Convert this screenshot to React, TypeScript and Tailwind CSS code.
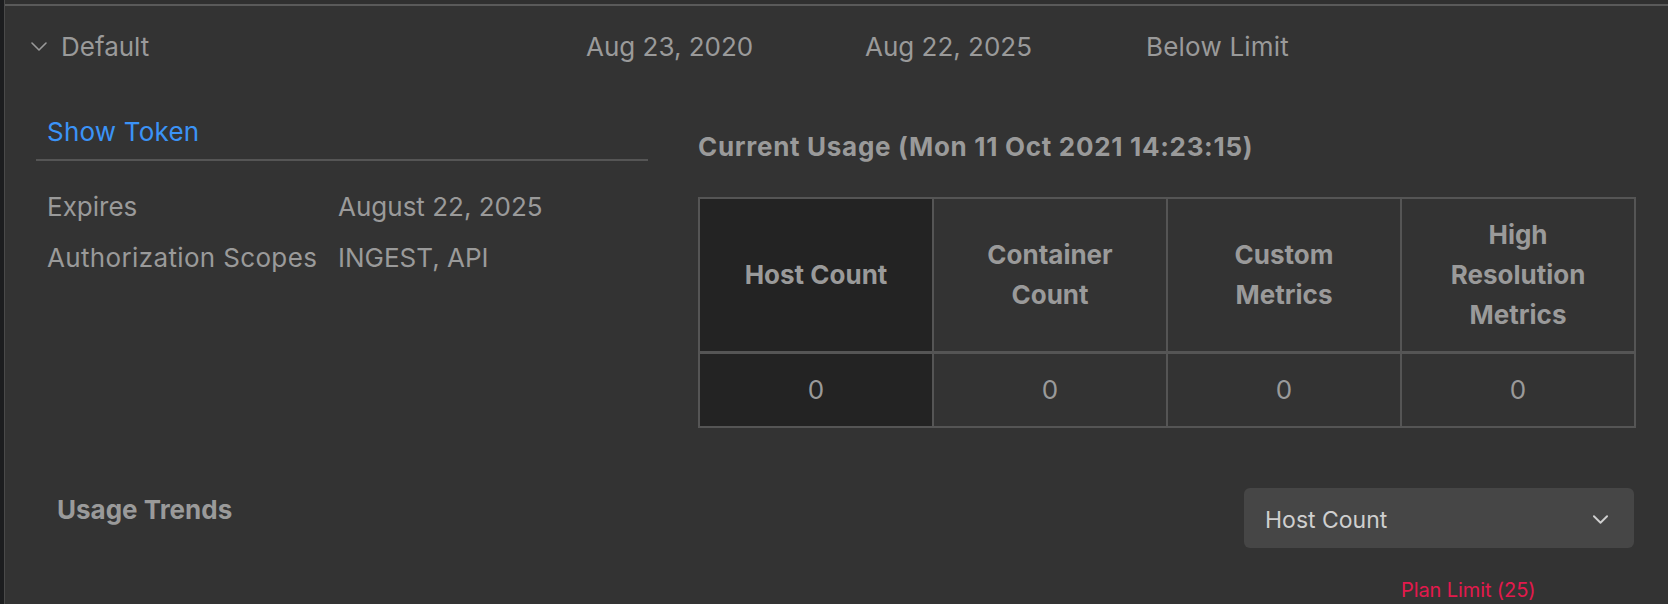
import React from 'react';

const font = { fontFamily: 'Inter, "Noto Sans", sans-serif' };

function Chevron({ className, stroke = 1.6 }: { className?: string; stroke?: number }) {
  return (
    <svg viewBox="0 0 16 9" className={className} fill="none" stroke="currentColor" strokeWidth={stroke}>
      <polyline points="1,1 8,8 15,1" strokeLinecap="round" strokeLinejoin="round" />
    </svg>
  );
}

const headers: string[][] = [
  ['Host Count'],
  ['Container', 'Count'],
  ['Custom', 'Metrics'],
  ['High', 'Resolution', 'Metrics'],
];

export default function App() {
  return (
    <div className="w-[1668px] h-[604px] overflow-hidden bg-[#1c1d1f] flex" style={font}>
      <div className="w-[4px] shrink-0" />
      <div className="flex-1 bg-[#333333] border-l border-[#4a4a4a] flex flex-col text-[#9a9a9a]">
        <div className="h-[4px] bg-[#303030]" />
        <div className="h-[2px] bg-[#5a5a5a]" />

        {/* summary row */}
        <div className="h-[80px] grid grid-cols-[581px_279px_281px_1fr] items-center text-[26px]">
          <div className="flex items-center pl-[26px] gap-[14px]">
            <Chevron className="w-[16px] h-[9px] text-[#9a9a9a]" />
            <span>Default</span>
          </div>
          <span>Aug 23, 2020</span>
          <span>Aug 22, 2025</span>
          <span className="tracking-[0.2px]">Below Limit</span>
        </div>

        {/* detail */}
        <div className="flex pl-[31px] pr-[32px]">
          <div className="w-[612px] pt-[26px]">
            <div className="border-b-2 border-[#555555] pb-[7px] pl-[11px]">
              <button type="button" className="leading-[40px] text-[26px] text-[#3b93f7] tracking-[0.2px]">
                Show Token
              </button>
            </div>
            <div className="mt-[20px] pl-[11px] text-[26px] leading-[51px]">
              <div className="flex">
                <span className="w-[291px]">Expires</span>
                <span>August 22, 2025</span>
              </div>
              <div className="flex">
                <span className="w-[291px] tracking-[0.35px]">Authorization Scopes</span>
                <span>INGEST, API</span>
              </div>
            </div>
          </div>

          <div className="ml-[50px] flex-1 pt-[41px]">
            <h3 className="text-[26px] font-bold leading-[40px] tracking-[0.7px]">
              Current Usage (Mon 11 Oct 2021 14:23:15)
            </h3>
            <table className="mt-[30px] w-full border-collapse table-fixed text-center text-[26px]">
              <thead>
                <tr>
                  {headers.map((lines, i) => (
                    <th
                      key={i}
                      className={`border-2 border-b-[3px] border-[#555555] py-[16px] font-bold leading-[40px] ${
                        i === 0 ? 'bg-[#232323]' : ''
                      }`}
                    >
                      {lines.map((l) => (
                        <span key={l} className="block">
                          {l}
                        </span>
                      ))}
                    </th>
                  ))}
                </tr>
              </thead>
              <tbody>
                <tr>
                  {headers.map((_, i) => (
                    <td
                      key={i}
                      className={`border-2 border-[#555555] py-[16px] leading-[40px] ${
                        i === 0 ? 'bg-[#232323]' : ''
                      }`}
                    >
                      0
                    </td>
                  ))}
                </tr>
              </tbody>
            </table>
          </div>
        </div>

        {/* trends */}
        <div className="mt-[60px] flex items-start justify-between pl-[52px] pr-[34px]">
          <h3 className="mt-[2px] text-[26px] font-bold leading-[40px]">Usage Trends</h3>
          <button
            type="button"
            className="w-[390px] h-[60px] rounded-[6px] bg-[#464646] flex items-center justify-between pl-[21px] pr-[26px] text-[23px] text-[#cfcfcf]"
          >
            <span className="pt-[4px]">Host Count</span>
            <Chevron className="w-[15px] h-[9px] mt-[2px]" stroke={2} />
          </button>
        </div>
        <div className="mt-[28px] pl-[1396px] text-[20px] leading-[28px] tracking-[-0.1px] text-[#e3194d]">
          Plan Limit (25)
        </div>
      </div>
    </div>
  );
}
